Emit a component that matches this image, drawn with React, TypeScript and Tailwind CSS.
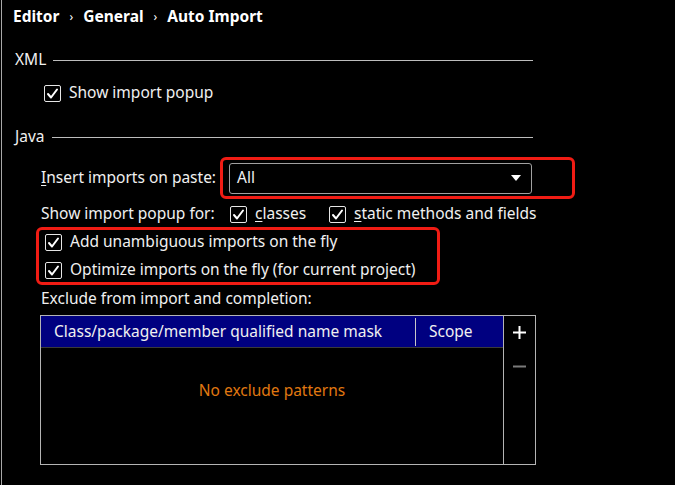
import React from 'react';

/* ++++++++++ SMALL PIECES ++++++++++ */

const CheckBox: React.FC = () => (
  <span className="flex h-[17px] w-[17px] shrink-0 items-center justify-center rounded-[2px] border border-[#e6e6e6]">
    <svg width="13" height="13" viewBox="0 0 13 13" fill="none">
      <path d="M2 7 L5 10.5 L11 2.5" stroke="#ffffff" strokeWidth="2" strokeLinecap="round" strokeLinejoin="round" />
    </svg>
  </span>
);

const CheckRow: React.FC<{ label: React.ReactNode }> = ({ label }) => (
  <label className="flex h-[20px] items-center gap-[8px]">
    <CheckBox />
    <span>{label}</span>
  </label>
);

const Section: React.FC<{ title: string }> = ({ title }) => (
  <div className="flex h-[20px] items-center gap-[7px] pl-[13px] pr-[142px]">
    <span>{title}</span>
    <div className="h-px flex-1 bg-[#bdbdbd]" />
  </div>
);

const App: React.FC = () => {
  return (
    <div className="h-[485px] w-[675px] overflow-hidden bg-black">
      <div
        className="ml-px flex h-full flex-col border-l border-[#a8a8a8] text-[15.5px] text-[#f0f0f0]"
        style={{ fontFamily: '"Noto Sans", "Open Sans", sans-serif' }}
      >
        {/* breadcrumb */}
        <div className="flex h-[34px] items-center gap-[10px] pl-[11px] font-bold text-white">
          <span>Editor</span>
          <span className="text-[12px] font-normal">›</span>
          <span>General</span>
          <span className="text-[12px] font-normal">›</span>
          <span>Auto Import</span>
        </div>

        {/* XML */}
        <div className="mt-[16px]">
          <Section title="XML" />
        </div>
        <div className="mt-[13px] pl-[42px]">
          <CheckRow label="Show import popup" />
        </div>

        {/* Java */}
        <div className="mt-[24px]">
          <Section title="Java" />
        </div>

        <div className="mt-[10px] flex h-[42px] items-center pl-[39px]">
          <span className="w-[179px]">
            <span className="underline underline-offset-2">I</span>nsert imports on paste:
          </span>
          <div className="flex h-[42px] w-[355px] items-center rounded-[6px] border-[3px] border-[#f01c14] pl-[6px]">
            <div className="flex h-[31px] w-[303px] items-center justify-between rounded-[3px] border border-[#a0a0a0] pl-[7px] pr-[10px]">
              <span>All</span>
              <svg width="10" height="6" viewBox="0 0 10 6">
                <path d="M0 0 H10 L5 6 Z" fill="#ffffff" />
              </svg>
            </div>
          </div>
        </div>

        <div className="mt-[5px] flex h-[20px] items-center pl-[39px]">
          <span className="w-[189px]">Show import popup for:</span>
          <div className="w-[99px]">
            <CheckRow
              label={
                <>
                  <span className="underline underline-offset-2">c</span>lasses
                </>
              }
            />
          </div>
          <CheckRow
            label={
              <>
                <span className="underline underline-offset-2">s</span>tatic methods and fields
              </>
            }
          />
        </div>

        <div className="ml-[34px] mt-[3px] flex h-[58px] w-[404px] flex-col gap-[8px] rounded-[6px] border-[3px] border-[#f01c14] pl-[6px] pt-[2px]">
          <CheckRow label="Add unambiguous imports on the fly" />
          <CheckRow label="Optimize imports on the fly (for current project)" />
        </div>

        <div className="mt-[4px] flex h-[20px] items-center pl-[39px]">
          Exclude from import and completion:
        </div>

        {/* table */}
        <div className="ml-[38px] mt-[6px] flex h-[150px] w-[496px] border border-[#b4b4b4]">
          <div className="flex flex-1 flex-col border-r border-[#b4b4b4]">
            <div className="flex h-[32px] items-center border-b border-[#3a3a3a] bg-[#000080]">
              <div className="flex h-[28px] w-[375px] items-center border-r border-[#c8c8c8] pl-[13px]">
                Class/package/member qualified name mask
              </div>
              <div className="pl-[13px]">Scope</div>
            </div>
            <div className="flex flex-1 justify-center pt-[31px] text-[#e07810]">No exclude patterns</div>
          </div>
          <div className="flex w-[31px] flex-col items-center pt-[10px]">
            <svg width="13" height="13" viewBox="0 0 13 13">
              <path d="M6.5 0 V13 M0 6.5 H13" stroke="#ffffff" strokeWidth="2" />
            </svg>
            <svg className="mt-[26px]" width="13" height="3" viewBox="0 0 13 3">
              <path d="M0 1.5 H13" stroke="#7a7a7a" strokeWidth="2" />
            </svg>
          </div>
        </div>
      </div>
    </div>
  );
};

export default App;
